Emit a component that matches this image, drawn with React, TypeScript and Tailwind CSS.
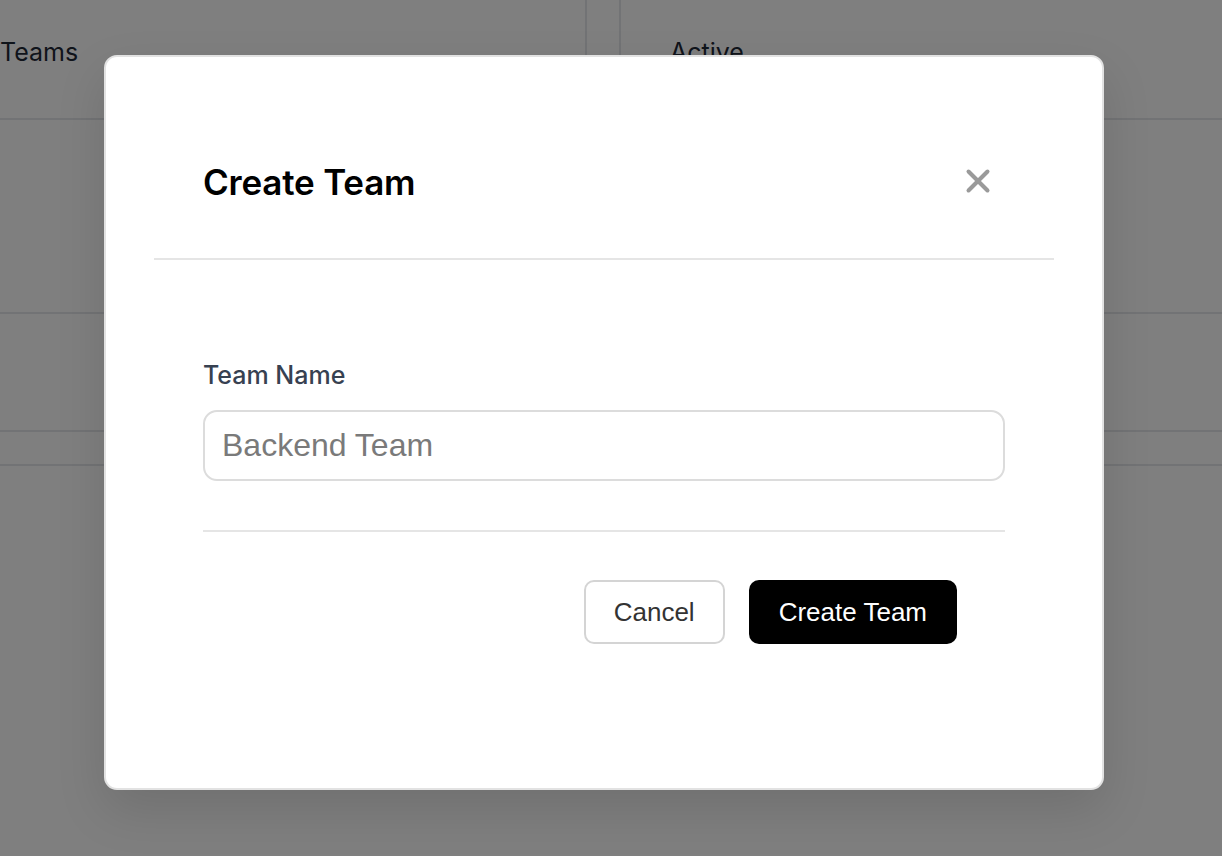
import { X } from 'lucide-react'

const BackgroundPage = () => {
  return (
    <div className="absolute inset-0 bg-white font-['Inter',sans-serif] text-[#1f2937]">
      <div className="flex h-[120px] border-b-2 border-[#e5e7eb]">
        <div className="w-[587px] border-r-2 border-[#e5e7eb] pt-[36px] text-[25px] leading-[32px]">
          Teams
        </div>
        <div className="w-[34px] border-r-2 border-[#e5e7eb]" />
        <div className="flex-1 pl-[49px] pt-[36px] text-[25px] leading-[32px]">Active</div>
      </div>
      <div className="h-[194px] border-b-2 border-[#e5e7eb]" />
      <div className="h-[118px] border-b-2 border-[#e5e7eb]" />
      <div className="h-[34px] border-b-2 border-[#e5e7eb]" />
    </div>
  )
}

const App = () => {
  return (
    <div className="relative h-[856px] w-[1222px] overflow-hidden">
      <BackgroundPage />

      <div className="absolute inset-0 flex items-start bg-black/50 pl-[104px] pt-[55px]">
        <div className="h-[735px] w-[1000px] rounded-[13px] border-2 border-[#e2e2e2] bg-white shadow-[0_20px_50px_rgba(0,0,0,0.12)]">
          <div className="mx-[48px] flex h-[203px] items-start justify-between border-b-2 border-[#e5e5e5] pl-[49px] pr-[57px] pt-[104px]">
            <h2 className="font-['Inter',sans-serif] text-[35px] font-semibold leading-[42px] tracking-[-0.2px] text-black">
              Create Team
            </h2>
            <button type="button" className="mt-[1px] text-[#9a9a9a]">
              <X size={38} strokeWidth={4} absoluteStrokeWidth />
            </button>
          </div>

          <div className="px-[97px] pt-[98px]">
            <label className="block font-['Inter',sans-serif] text-[25px] font-medium leading-[34px] text-[#374151]">
              Team Name
            </label>
            <input
              type="text"
              placeholder="Backend Team"
              className="mt-[18px] h-[71px] w-full rounded-[14px] border-2 border-[#dcdcdc] px-[17px] font-['Liberation_Sans',Arial,sans-serif] text-[32px] text-[#333] outline-none placeholder:text-[#7a7a7a]"
            />

            <div className="mt-[49px] border-t-2 border-[#e5e5e5]" />

            <div className="mt-[48px] flex justify-end gap-[24px] pr-[48px]">
              <button
                type="button"
                className="h-[64px] rounded-[10px] border-2 border-[#d4d4d4] bg-white px-[28px] font-['Liberation_Sans',Arial,sans-serif] text-[26px] text-[#333]"
              >
                Cancel
              </button>
              <button
                type="button"
                className="h-[64px] rounded-[10px] bg-black px-[30px] font-['Liberation_Sans',Arial,sans-serif] text-[26px] text-white"
              >
                Create Team
              </button>
            </div>
          </div>
        </div>
      </div>
    </div>
  )
}

export default App
